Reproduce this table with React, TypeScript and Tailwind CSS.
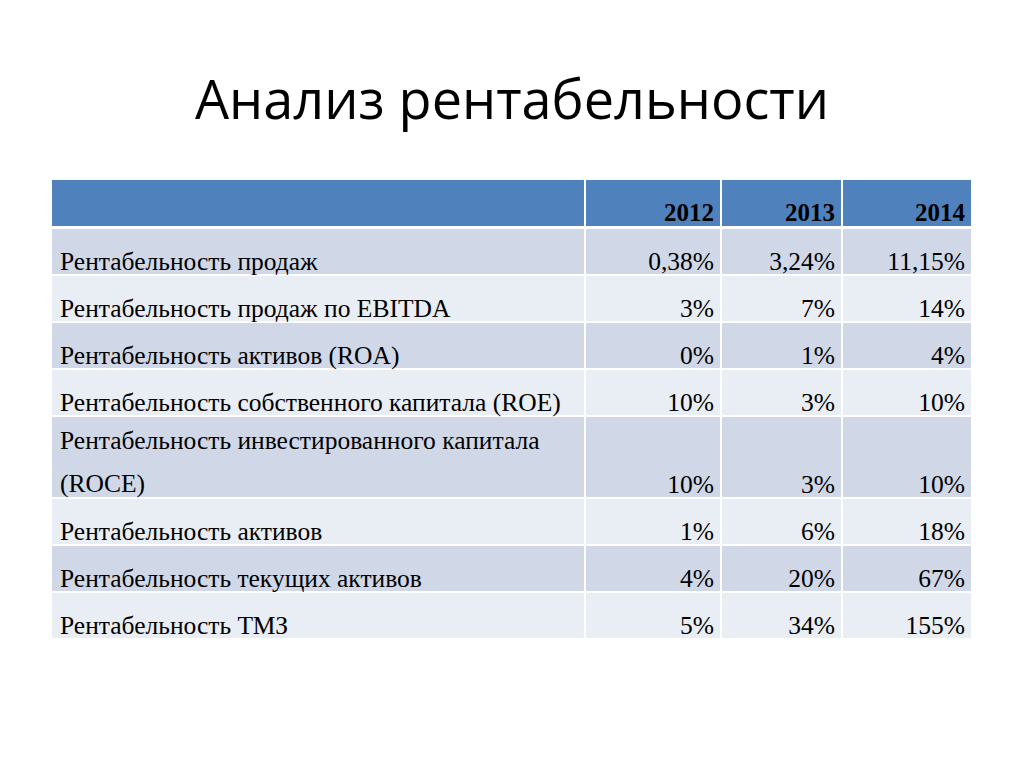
const rows: { label: string; v: [string, string, string]; tall?: boolean }[] = [
  { label: "Рентабельность продаж", v: ["0,38%", "3,24%", "11,15%"] },
  { label: "Рентабельность продаж по EBITDA", v: ["3%", "7%", "14%"] },
  { label: "Рентабельность активов (ROA)", v: ["0%", "1%", "4%"] },
  { label: "Рентабельность собственного капитала (ROE)", v: ["10%", "3%", "10%"] },
  { label: "Рентабельность инвестированного капитала (ROCE)", v: ["10%", "3%", "10%"], tall: true },
  { label: "Рентабельность активов", v: ["1%", "6%", "18%"] },
  { label: "Рентабельность текущих активов", v: ["4%", "20%", "67%"] },
  { label: "Рентабельность ТМЗ", v: ["5%", "34%", "155%"] },
];

export default function App() {
  return (
    <div className="w-[1024px] h-[768px] bg-white overflow-hidden">
      <h1 className="h-[180px] pt-[68px] text-center text-[54px] leading-[60px] text-black font-[family-name:'Open_Sans',sans-serif]">
        Анализ рентабельности
      </h1>
      <div className="ml-[52px] w-[919px] font-[family-name:'Liberation_Serif','Times_New_Roman',serif] text-[25.5px] leading-[25px] text-black">
        <div className="grid grid-cols-[532px_134px_119px_128px] gap-x-[2px] h-[46px]">
          <div className="bg-[#4f81bd]" />
          {["2012", "2013", "2014"].map((y) => (
            <div key={y} className="bg-[#4f81bd] flex items-end justify-end pr-[6px] pb-[1px] font-bold text-[25px]">
              {y}
            </div>
          ))}
        </div>
        <div className="flex flex-col gap-y-[2px] mt-[3px]">
          {rows.map((r, i) => (
            <div
              key={r.label}
              className={
                "grid grid-cols-[532px_134px_119px_128px] gap-x-[2px] " +
                (r.tall ? "h-[80px]" : "h-[45px]")
              }
            >
              {[r.label, ...r.v].map((t, j) => (
                <div
                  key={j}
                  className={
                    (i % 2 === 0 ? "bg-[#d0d8e8] " : "bg-[#e9edf4] ") +
                    (j === 0
                      ? "flex items-end pl-[8px] pr-[4px]"
                      : "flex items-end justify-end pr-[6px]")
                  }
                >
                  <span className={j === 0 && r.tall ? "block leading-[43px] -mb-[8px]" : ""}>{t}</span>
                </div>
              ))}
            </div>
          ))}
        </div>
      </div>
    </div>
  );
}
